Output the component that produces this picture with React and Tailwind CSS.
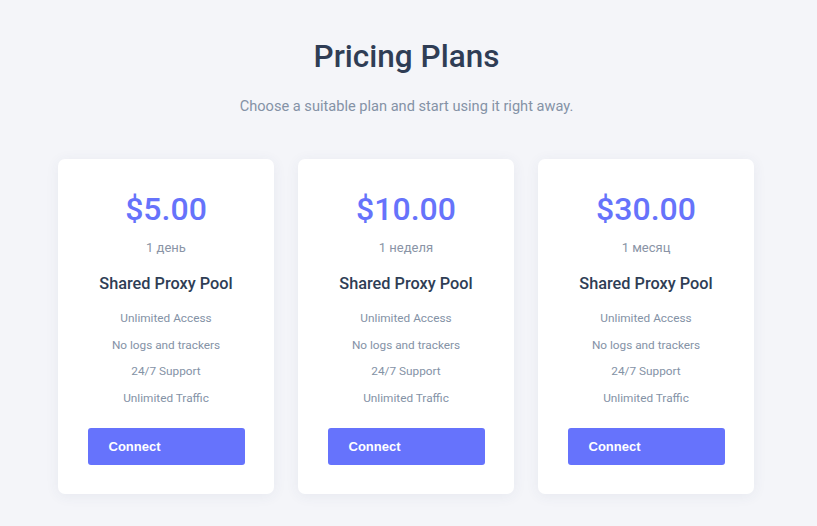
const PLANS = [
  { price: "$5.00", period: "1 день" },
  { price: "$10.00", period: "1 неделя" },
  { price: "$30.00", period: "1 месяц" },
];

const FEATURES = [
  "Unlimited Access",
  "No logs and trackers",
  "24/7 Support",
  "Unlimited Traffic",
];

function PlanCard({ price, period }) {
  return (
    <div className="w-[216px] bg-white rounded-[7px] shadow-[0_2px_14px_rgba(60,70,110,0.07)] px-[30px] pt-[30px] pb-[29px] flex flex-col items-center">
      <div className="text-[32px] leading-[40px] font-medium text-[#6673fb]">
        {price}
      </div>
      <div className="mt-[10px] text-[13px] leading-[18px] text-[#8a94a6]">
        {period}
      </div>
      <div className="mt-[15px] text-[16.3px] leading-[24px] font-medium text-[#2e3d55]">
        Shared Proxy Pool
      </div>
      <ul className="mt-[9px] flex flex-col items-center">
        {FEATURES.map((f) => (
          <li key={f} className="text-[11.8px] leading-[26.7px] text-[#8492a6]">
            {f}
          </li>
        ))}
      </ul>
      <button className="mt-[16px] w-[157px] h-[37px] rounded-[3px] bg-[#6673fc] text-left pl-[21px] text-white text-[13px] font-bold font-['Liberation_Sans',Arial,sans-serif]">
        Connect
      </button>
    </div>
  );
}

export default function App() {
  return (
    <div className="min-h-[526px] bg-[#f4f5f9] font-['Roboto',sans-serif] pt-[37px] flex flex-col items-center">
      <h1 className="text-[31.5px] leading-[40px] font-medium text-[#2f3d55] pr-[4px]">
        Pricing Plans
      </h1>
      <p className="mt-[19px] text-[14.6px] leading-[20px] text-[#8492a6] pr-[4px]">
        Choose a suitable plan and start using it right away.
      </p>
      <div className="mt-[43px] flex gap-[24px] pr-[5px]">
        {PLANS.map((p) => (
          <PlanCard key={p.price} {...p} />
        ))}
      </div>
    </div>
  );
}
